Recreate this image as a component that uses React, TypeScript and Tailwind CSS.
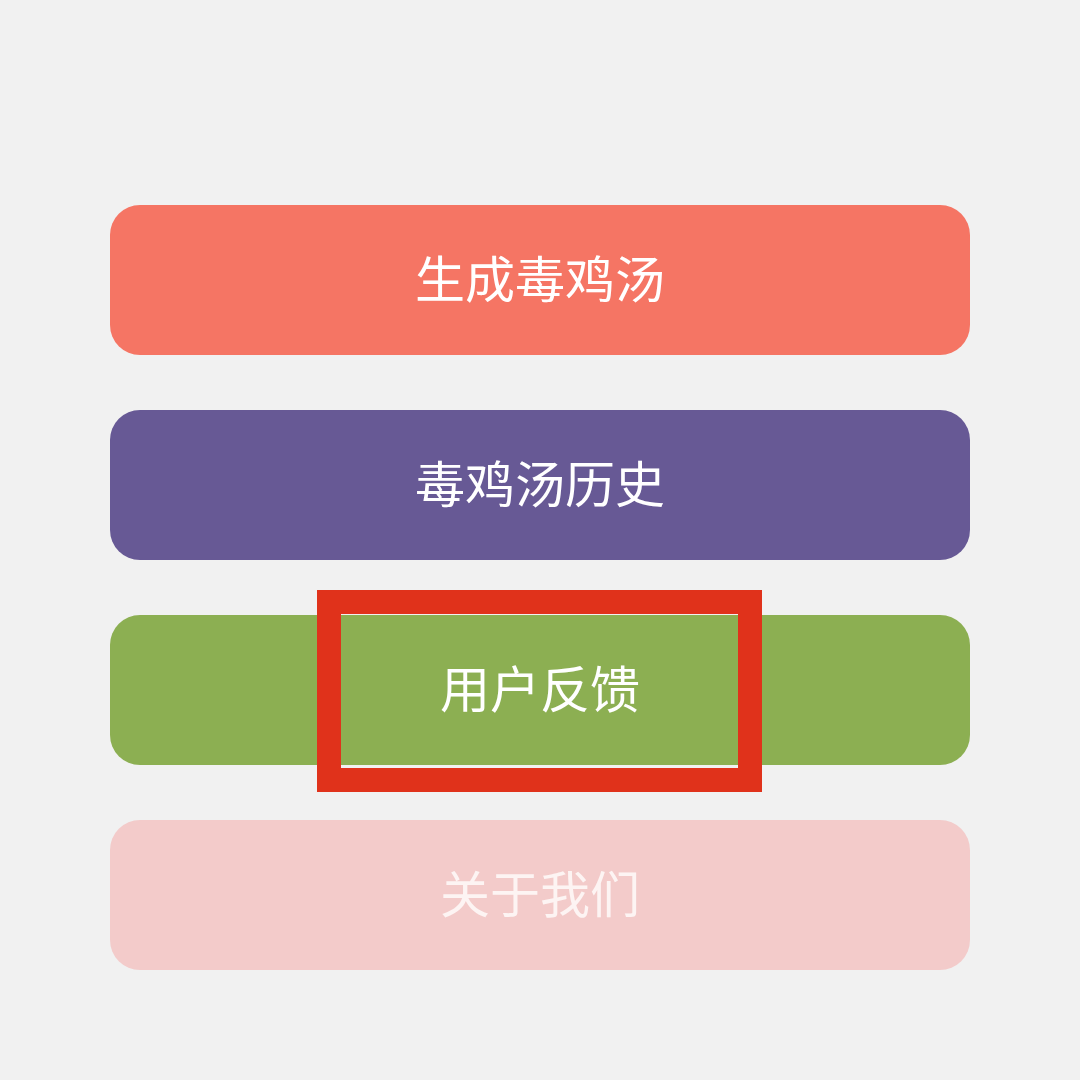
export default function App() {
  const font = { fontFamily: '"Noto Sans CJK SC", "Noto Sans", sans-serif' };
  return (
    <div className="w-[1080px] h-[1080px] bg-[#f1f1f1] pt-[205px] px-[110px] flex flex-col gap-[55px]" style={font}>
      <div className="h-[150px] rounded-[30px] bg-[#f57564] flex items-center justify-center pb-[8px] text-white text-[50px] font-normal">
        生成毒鸡汤
      </div>
      <div className="h-[150px] rounded-[30px] bg-[#675995] flex items-center justify-center pb-[8px] text-white text-[50px] font-normal">
        毒鸡汤历史
      </div>
      <div className="relative h-[150px] rounded-[30px] bg-[#8caf52] flex items-center justify-center pb-[8px] text-white text-[50px] font-normal">
        用户反馈
        <div className="absolute left-[207px] top-[-25px] w-[445px] h-[202px] border-[24px] border-[#e0321b]" />
      </div>
      <div className="h-[150px] rounded-[30px] bg-[#f3cbca] flex items-center justify-center pb-[8px] text-[#fdf4f3] text-[50px] font-normal">
        关于我们
      </div>
    </div>
  );
}
